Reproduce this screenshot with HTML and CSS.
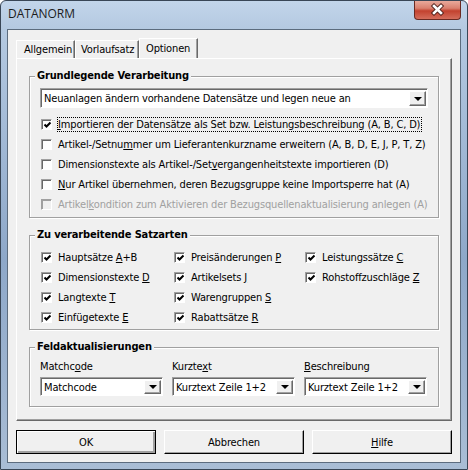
FILE: index.html
```html
<!DOCTYPE html>
<html lang="de">
<head>
    <meta charset="UTF-8">
    <title>DATANORM</title>
    <link rel="stylesheet" href="styles.css">
</head>
<body>
    <div class="window">
        <div class="titlebar">
            <span class="title">DATANORM</span>
            <div class="close">
                <svg width="45" height="18" viewBox="0 0 45 18">
                    <path d="M19 5l7 7M26 5l-7 7" stroke="#4b1d17" stroke-width="4.4" stroke-linecap="square" fill="none"/>
                    <path d="M19 5l7 7M26 5l-7 7" stroke="#fff" stroke-width="2.6" stroke-linecap="square" fill="none"/>
                </svg>
            </div>
        </div>
        <div class="client">
            <div class="tabs">
                <div class="tab tab-general">Allgemein</div>
                <div class="tab tab-header">Vorlaufsatz</div>
                <div class="tab active">Optionen</div>
            </div>
            <div class="page">
                <div class="group group-basic">
                    <div class="group-title">Grundlegende Verarbeitung</div>
                    <div class="combo combo-wide">
                        <span class="combo-text">Neuanlagen ändern vorhandene Datensätze und legen neue an</span>
                        <span class="drop"></span>
                    </div>
                    <div class="rows">
                        <div class="check">
                            <span class="box"><svg width="9" height="9" viewBox="0 0 9 9"><path d="M1.5 3.5l2 2 4-4" stroke="#000" stroke-width="2" fill="none"/></svg></span>
                            <span class="focus"><u>I</u>mportieren der Datensätze als Set bzw. Leistungsbeschreibung (A, B, C, D)</span>
                        </div>
                        <div class="check">
                            <span class="box"></span>
                            <span>Artikel-/Setnu<u>m</u>mer um Lieferantenkurzname erweitern (A, B, D, E, J, P, T, Z)</span>
                        </div>
                        <div class="check">
                            <span class="box"></span>
                            <span>Dimensionstexte als Artikel-/Set<u>v</u>ergangenheitstexte importieren (D)</span>
                        </div>
                        <div class="check">
                            <span class="box"></span>
                            <span><u>N</u>ur Artikel übernehmen, deren Bezugsgruppe keine Importsperre hat (A)</span>
                        </div>
                        <div class="check disabled">
                            <span class="box"></span>
                            <span>Artikel<u>k</u>ondition zum Aktivieren der Bezugsquellenaktualisierung anlegen (A)</span>
                        </div>
                    </div>
                </div>

                <div class="group group-types">
                    <div class="group-title">Zu verarbeitende Satzarten</div>
                    <div class="check-grid">
                        <div class="check"><span class="box"><svg width="9" height="9" viewBox="0 0 9 9"><path d="M1.5 3.5l2 2 4-4" stroke="#000" stroke-width="2" fill="none"/></svg></span><span>Hauptsätze <u>A</u>+B</span></div>
                        <div class="check"><span class="box"><svg width="9" height="9" viewBox="0 0 9 9"><path d="M1.5 3.5l2 2 4-4" stroke="#000" stroke-width="2" fill="none"/></svg></span><span>Dimensionstexte <u>D</u></span></div>
                        <div class="check"><span class="box"><svg width="9" height="9" viewBox="0 0 9 9"><path d="M1.5 3.5l2 2 4-4" stroke="#000" stroke-width="2" fill="none"/></svg></span><span>Langtexte <u>T</u></span></div>
                        <div class="check"><span class="box"><svg width="9" height="9" viewBox="0 0 9 9"><path d="M1.5 3.5l2 2 4-4" stroke="#000" stroke-width="2" fill="none"/></svg></span><span>Einfügetexte <u>E</u></span></div>
                        <div class="check"><span class="box"><svg width="9" height="9" viewBox="0 0 9 9"><path d="M1.5 3.5l2 2 4-4" stroke="#000" stroke-width="2" fill="none"/></svg></span><span>Preisänderungen <u>P</u></span></div>
                        <div class="check"><span class="box"><svg width="9" height="9" viewBox="0 0 9 9"><path d="M1.5 3.5l2 2 4-4" stroke="#000" stroke-width="2" fill="none"/></svg></span><span>Artikelsets <u>J</u></span></div>
                        <div class="check"><span class="box"><svg width="9" height="9" viewBox="0 0 9 9"><path d="M1.5 3.5l2 2 4-4" stroke="#000" stroke-width="2" fill="none"/></svg></span><span>Warengruppen <u>S</u></span></div>
                        <div class="check"><span class="box"><svg width="9" height="9" viewBox="0 0 9 9"><path d="M1.5 3.5l2 2 4-4" stroke="#000" stroke-width="2" fill="none"/></svg></span><span>Rabattsätze <u>R</u></span></div>
                        <div class="check"><span class="box"><svg width="9" height="9" viewBox="0 0 9 9"><path d="M1.5 3.5l2 2 4-4" stroke="#000" stroke-width="2" fill="none"/></svg></span><span>Leistungssätze <u>C</u></span></div>
                        <div class="check"><span class="box"><svg width="9" height="9" viewBox="0 0 9 9"><path d="M1.5 3.5l2 2 4-4" stroke="#000" stroke-width="2" fill="none"/></svg></span><span>Rohstoffzuschläge <u>Z</u></span></div>
                    </div>
                </div>

                <div class="group group-fields">
                    <div class="group-title">Feldaktualisierungen</div>
                    <div class="fields">
                        <div class="field">
                            <div class="field-label">Matchc<u>o</u>de</div>
                            <div class="combo combo-small"><span class="combo-text">Matchcode</span><span class="drop"></span></div>
                        </div>
                        <div class="field">
                            <div class="field-label">Kurzte<u>x</u>t</div>
                            <div class="combo combo-small"><span class="combo-text">Kurztext Zeile 1+2</span><span class="drop"></span></div>
                        </div>
                        <div class="field">
                            <div class="field-label"><u>B</u>eschreibung</div>
                            <div class="combo combo-small"><span class="combo-text">Kurztext Zeile 1+2</span><span class="drop"></span></div>
                        </div>
                    </div>
                </div>
            </div>
            <div class="buttons">
                <button class="btn default">OK</button>
                <button class="btn">Abbrechen</button>
                <button class="btn"><u>H</u>ilfe</button>
            </div>
        </div>
    </div>
</body>
</html>
```

FILE: styles.css
```css
body {
    margin: 0;
    background: #fff;
    font-family: "DejaVu Sans Condensed", "Liberation Sans", sans-serif;
    font-size: 11px;
    letter-spacing: -0.15px;
    color: #000;
}

u {
    text-underline-offset: 1px;
}

/* window frame */
.window {
    box-sizing: border-box;
    width: 468px;
    height: 470px;
    border: 1px solid #394656;
    border-radius: 6px 6px 0 0;
    padding: 0 6px 6px;
    background: linear-gradient(#c2d5ea, #b4c9e1 28px, #8ea8c9 55%, #a9bdd5);
    display: flex;
    flex-direction: column;
}

.titlebar {
    flex: none;
    height: 28px;
    display: flex;
    justify-content: space-between;
    align-items: flex-start;
}

.title {
    font-family: "Open Sans", "Noto Sans", sans-serif;
    font-size: 12px;
    line-height: 16px;
    letter-spacing: 0;
    margin: 5px 0 0 1px;
    color: #1b1b1b;
}

.close {
    box-sizing: border-box;
    width: 47px;
    height: 19px;
    border: 1px solid #6a2a22;
    border-top: none;
    border-radius: 0 0 4px 4px;
    background: linear-gradient(#e9a99b, #d9806f 40%, #c3422f 55%, #d46d5b);
}

.close svg {
    display: block;
}

.client {
    flex: 1;
    border: 1px solid #5c6c7e;
    background: #f0f0f0;
    padding: 8px;
    display: flex;
    flex-direction: column;
}

/* tabs */
.tabs {
    flex: none;
    height: 20px;
    display: flex;
    align-items: flex-end;
}

.tab {
    box-sizing: border-box;
    height: 18px;
    line-height: 17px;
    border-top: 1px solid #fff;
    border-left: 1px solid #fff;
    border-right: 1px solid #696969;
    box-shadow: inset -1px 0 0 #a0a0a0;
    padding-left: 7px;
    white-space: nowrap;
}

.tab-general {
    width: 59px;
}

.tab-header {
    width: 64px;
    padding-left: 5px;
}

.tab.active {
    width: 59px;
    height: 20px;
    line-height: 19px;
    padding-left: 6px;
}

.page {
    flex: 1;
    border: 1px solid;
    border-color: #fff #696969 #696969 #fff;
    box-shadow: inset -1px -1px 0 #a0a0a0;
    padding: 0 12px;
}

/* group boxes */
.group {
    border: 1px solid #a0a0a0;
    box-shadow: inset 1px 1px 0 #fff, 1px 1px 0 #fff;
    margin-top: 17px;
    padding: 0 10px;
}

.group-title {
    display: table;
    margin: -8px 0 0 -5px;
    padding: 0 2px;
    background: #f0f0f0;
    font-weight: bold;
    line-height: 14px;
}

.group-basic {
    padding-bottom: 3px;
}

.group-types {
    padding-bottom: 2px;
}

.group-fields {
    padding-bottom: 10px;
}

/* combo boxes */
.combo {
    box-sizing: border-box;
    display: flex;
    align-items: center;
    border: 1px solid;
    border-color: #a0a0a0 #fff #fff #a0a0a0;
    box-shadow: inset 1px 1px 0 #696969;
    background: #fff;
    padding: 2px 1px 1px 2px;
}

.combo-wide {
    height: 20px;
    margin-top: 5px;
}

.combo-small {
    height: 19px;
    margin-top: 3px;
}

.combo-text {
    flex: 1;
    padding-left: 1px;
    white-space: nowrap;
    overflow: hidden;
}

.drop {
    box-sizing: border-box;
    width: 17px;
    align-self: stretch;
    border: 1px solid;
    border-color: #fff #696969 #696969 #fff;
    box-shadow: inset -1px -1px 0 #a0a0a0;
    background: #f0f0f0;
    display: flex;
    align-items: center;
    justify-content: center;
}

.drop::after {
    content: "";
    border-top: 4px solid #000;
    border-left: 4px solid transparent;
    border-right: 4px solid transparent;
}

/* check boxes */
.rows {
    margin-top: 6px;
}

.check {
    display: flex;
    align-items: center;
    height: 20px;
    white-space: nowrap;
}

.box {
    box-sizing: border-box;
    flex: none;
    width: 11px;
    height: 11px;
    margin: 0 6px 0 1px;
    border: 1px solid;
    border-color: #a0a0a0 #fff #fff #a0a0a0;
    box-shadow: inset 1px 1px 0 #696969;
    background: #fff;
    padding: 1px 0 0 1px;
}

.box svg {
    display: block;
}

.focus {
    line-height: 13px;
    outline: 1px dotted #000;
    padding-right: 1px;
}

.check.disabled {
    color: #a0a0a0;
}

.check.disabled .box {
    background: #f0f0f0;
    box-shadow: inset 1px 1px 0 #a0a0a0;
}

.check-grid {
    display: grid;
    grid-template-columns: 133px 131px auto;
    grid-template-rows: repeat(4, 20px);
    grid-auto-flow: column;
    margin-top: 5px;
}

/* field update combos */
.fields {
    display: grid;
    grid-template-columns: repeat(3, 123px);
    column-gap: 9px;
    margin-top: 6px;
}

.field-label {
    line-height: 14px;
}

/* buttons */
.buttons {
    flex: none;
    display: grid;
    grid-template-columns: repeat(3, 140px);
    column-gap: 8px;
    margin-top: 9px;
}

.btn {
    height: 24px;
    font: inherit;
    letter-spacing: inherit;
    color: #000;
    background: #f0f0f0;
    border: 1px solid;
    border-color: #fff #000 #000 #fff;
    box-shadow: inset -1px -1px 0 #a0a0a0;
    padding: 0;
}

.btn.default {
    border-color: #000;
    box-shadow: inset 1px 1px 0 #fff, inset -2px -2px 0 #a0a0a0;
}
```
